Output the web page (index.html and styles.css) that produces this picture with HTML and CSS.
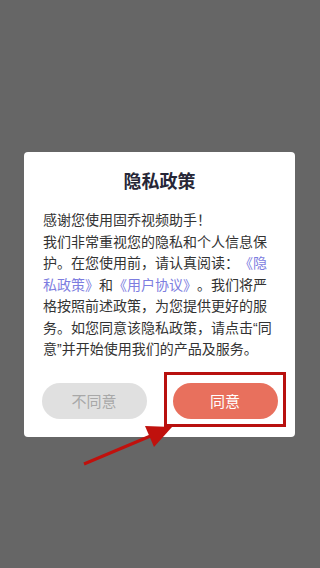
FILE: index.html
```html
<!DOCTYPE html>
<html lang="zh-CN">
<head>
<meta charset="UTF-8">
<meta name="viewport" content="width=device-width, initial-scale=1.0">
<title>隐私政策</title>
<link rel="stylesheet" href="styles.css">
</head>
<body>

<div class="screen">
  <!-- Privacy dialog -->
  <div class="dialog">
    <h2 class="dialog-title">隐私政策</h2>
    <p class="dialog-text">感谢您使用固乔视频助手！<br>我们非常重视您的隐私和个人信息保护。在您使用前，请认真阅读：<a href="#">《隐私政策》</a>和<a href="#">《用户协议》</a>。我们将严格按照前述政策，为您提供更好的服务。如您同意该隐私政策，请点击“同意”并开始使用我们的产品及服务。</p>
    <div class="button-group">
      <button type="button" class="btn btn-cancel">不同意</button>
      <button type="button" class="btn btn-ok">同意</button>
    </div>
  </div>

  <!-- Annotation: box and arrow -->
  <div class="mark-box"></div>
  <svg class="mark-arrow" width="100" height="50" viewBox="80 422 100 50">
    <line x1="84" y1="464" x2="160" y2="432" stroke="#c0110d" stroke-width="3"/>
    <polygon points="172,427 145,426 154,447" fill="#c0110d"/>
  </svg>
</div>

</body>
</html>
```

FILE: styles.css
```css
body {
  margin: 0;
  background-color: #666;
  font-family: "Liberation Sans", "Noto Sans CJK SC", sans-serif;
}
.screen {
  position: relative;
  height: 568px;
  padding: 152px 25px 0 24px;
  box-sizing: border-box;
}
.dialog {
  background-color: #fff;
  border-radius: 4px;
  padding: 18px 0 18px 0;
}
.dialog-title {
  margin: 0;
  text-align: center;
  font-size: 18px;
  line-height: 24px;
  font-weight: bold;
  color: #262636;
}
.dialog-text {
  margin: 16px 0 0 0;
  padding: 0 19px;
  font-size: 14px;
  line-height: 21.5px;
  color: #333;
  text-spacing-trim: space-all;
}
.dialog-text a {
  color: #7d7de0;
  text-decoration: none;
}
.button-group {
  display: flex;
  justify-content: center;
  gap: 26px;
  margin-top: 22px;
}
.btn {
  width: 105px;
  height: 36px;
  border: none;
  border-radius: 18px;
  font-family: "Liberation Sans", "Noto Sans CJK SC", sans-serif;
  font-size: 15px;
  padding: 0;
}
.btn-cancel {
  background-color: #e0e0e0;
  color: #a8a8a8;
}
.btn-ok {
  background-color: #e8705d;
  color: #fff;
}
.mark-box {
  position: absolute;
  left: 164px;
  top: 372px;
  width: 122px;
  height: 55px;
  box-sizing: border-box;
  border: 3px solid #b8100e;
}
.mark-arrow {
  position: absolute;
  left: 80px;
  top: 422px;
}
```
